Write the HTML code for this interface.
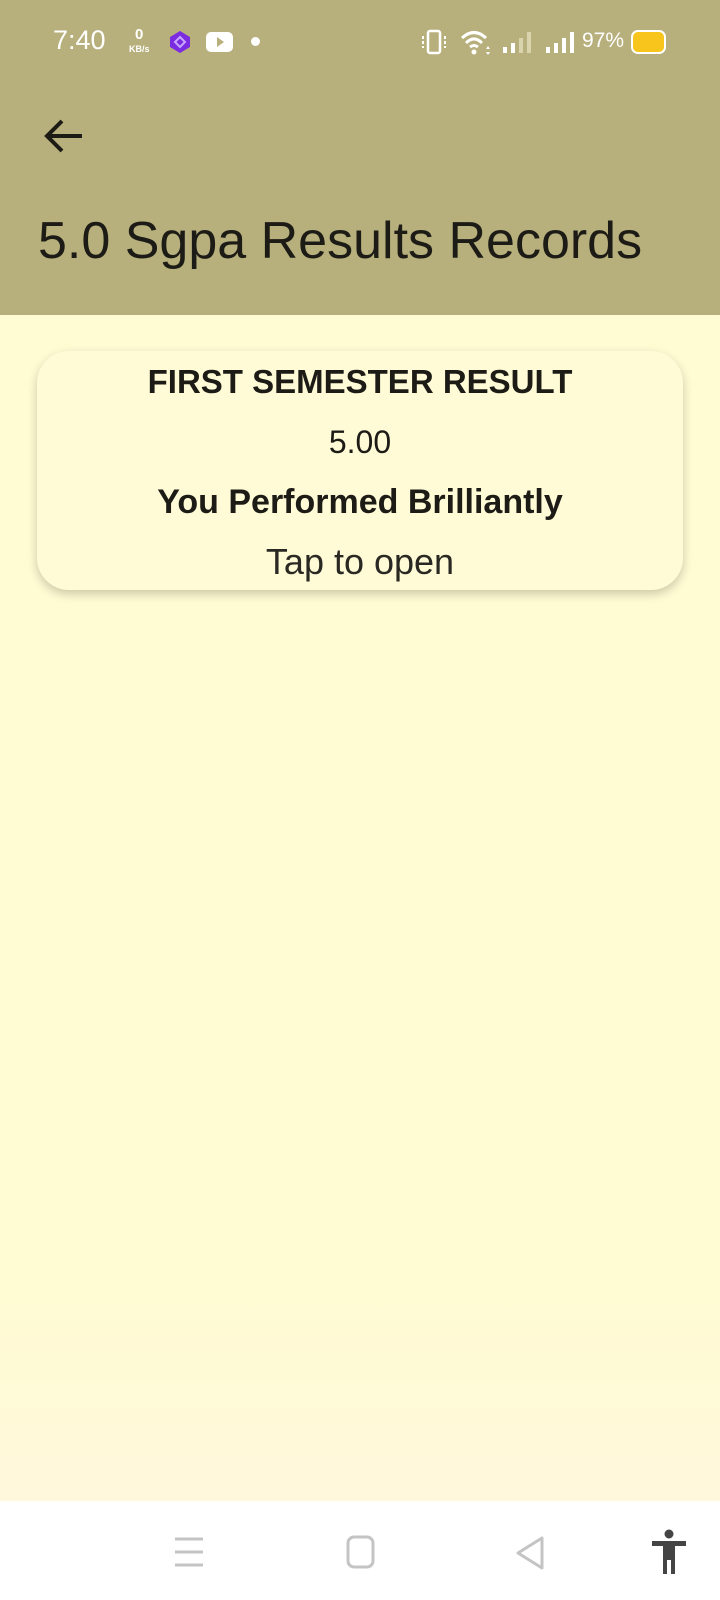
<!DOCTYPE html>
<html><head><meta charset="utf-8"><style>
html,body{margin:0;padding:0}
body{width:720px;height:1600px;position:relative;overflow:hidden;background:#fffbd3;font-family:"Liberation Sans",sans-serif;color:#1d1b16}
.hdr{position:absolute;left:0;top:0;width:720px;height:315px;background:#b7b07c}
.t{position:absolute;color:#fff}
.title{position:absolute;left:38px;top:211px;font-size:52px;letter-spacing:0;color:#1d1b16;white-space:nowrap}
.card{position:absolute;left:37px;top:351px;width:646px;height:239px;border-radius:32px;background:#fffbd6;box-shadow:0 4px 10px rgba(0,0,0,0.2)}
.card div{position:absolute;left:0;width:100%;text-align:center;white-space:nowrap}
.nav{position:absolute;left:0;top:1501px;width:720px;height:99px;background:#fff}
.fade{position:absolute;left:0;top:1300px;width:720px;height:201px;background:linear-gradient(#fffbd3,#fff8dc)}
</style></head><body>
<div class="hdr"></div>
<div class="t" style="left:53px;top:25px;font-size:27px">7:40</div>
<div class="t" style="left:135px;top:26px;font-size:15px;font-weight:bold">0</div>
<div class="t" style="left:129px;top:44px;font-size:9px;font-weight:bold">KB/s</div>
<svg class="t" style="left:169px;top:30px" width="22" height="24" viewBox="0 0 22 24"><path d="M11 1 L21 7 V17 L11 23 L1 17 V7Z" fill="#7b2be0"/><path d="M6 12 L11 7 L16 12 L11 17Z" fill="none" stroke="#c8a8ff" stroke-width="2"/></svg>
<div class="t" style="left:206px;top:32px;width:27px;height:20px;background:#fff;border-radius:5px"></div>
<div style="position:absolute;left:217px;top:37px;width:0;height:0;border-left:7px solid #b7b07c;border-top:5px solid transparent;border-bottom:5px solid transparent"></div>
<div class="t" style="left:251px;top:37px;width:9px;height:9px;border-radius:50%;background:#fff"></div>
<svg class="t" style="left:420px;top:28px" width="28" height="28" viewBox="0 0 28 28"><rect x="8" y="3" width="12" height="22" rx="2" fill="none" stroke="#fff" stroke-width="2.5"/><path d="M3 8v12M25 8v12" stroke="#fff" stroke-width="2" stroke-dasharray="3 2"/></svg>
<svg class="t" style="left:460px;top:28px" width="32" height="28" viewBox="0 0 32 28"><path d="M2 10 Q14 -1 26 10 M6 15 Q14 7 22 15 M10 19 Q14 16 18 19" fill="none" stroke="#fff" stroke-width="3"/><circle cx="14" cy="24" r="2.5" fill="#fff"/><path d="M28 18l2 3h-4zM28 27l2-3h-4z" fill="#fff"/></svg>
<svg class="t" style="left:502px;top:30px" width="30" height="24"><rect x="1" y="17" width="4" height="6" fill="#fff"/><rect x="9" y="13" width="4" height="10" fill="#fff"/><rect x="17" y="8" width="4" height="15" fill="#d9d4ad"/><rect x="25" y="2" width="4" height="21" fill="#d9d4ad"/></svg>
<svg class="t" style="left:545px;top:30px" width="30" height="24"><rect x="1" y="17" width="4" height="6" fill="#fff"/><rect x="9" y="13" width="4" height="10" fill="#fff"/><rect x="17" y="8" width="4" height="15" fill="#fff"/><rect x="25" y="2" width="4" height="21" fill="#fff"/></svg>
<div class="t" style="left:582px;top:29px;font-size:21px">97%</div>
<div class="t" style="left:631px;top:30px;width:31px;height:20px;border:2.5px solid #fff;border-radius:7px;background:#f8c51c"></div>
<svg style="position:absolute;left:42px;top:116px" width="42" height="40" viewBox="0 0 42 40"><path d="M40 20H6M20 5L5 20L20 35" fill="none" stroke="#1d1b16" stroke-width="4"/></svg>
<div class="title">5.0 Sgpa Results Records</div>
<div class="fade"></div>
<div class="card">
<div style="top:12px;font-size:33px;font-weight:bold">FIRST SEMESTER RESULT</div>
<div style="top:73px;font-size:32px">5.00</div>
<div style="top:132px;font-size:34px;font-weight:bold">You Performed Brilliantly</div>
<div style="top:190px;font-size:36px;color:#2a2822">Tap to open</div>
</div>
<div class="nav"></div>
<svg style="position:absolute;left:174px;top:1536px" width="30" height="32"><path d="M1 3h28M1 16h28M1 29h28" stroke="#c4c4c4" stroke-width="3"/></svg>
<svg style="position:absolute;left:346px;top:1535px" width="30" height="34"><rect x="2" y="2" width="25" height="30" rx="6" fill="none" stroke="#c4c4c4" stroke-width="3"/></svg>
<svg style="position:absolute;left:515px;top:1535px" width="30" height="36"><path d="M27 3V33L3 18Z" fill="none" stroke="#c4c4c4" stroke-width="3" stroke-linejoin="round"/></svg>
<svg style="position:absolute;left:651px;top:1529px" width="36" height="46" viewBox="0 0 36 46"><circle cx="18" cy="5" r="4.5" fill="#444"/><path d="M1 12h34v5h-11v28h-4v-14h-4v14h-4v-28h-11z" fill="#444"/></svg>
</body></html>
